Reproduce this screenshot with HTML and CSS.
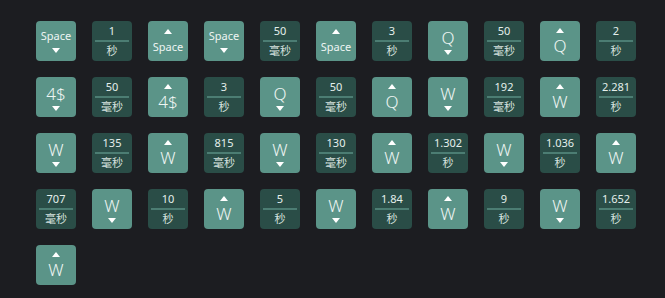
FILE: index.html
```html
<!DOCTYPE html>
<html>
<head>
<meta charset="utf-8">
<link rel="stylesheet" href="styles.css">
</head>
<body>
<div class="seq" id="seq"></div>
<script src="app.js"></script>
</body>
</html>
```

FILE: styles.css
```css
html, body {
  margin: 0;
  padding: 0;
  background: #1c1d21;
}
.seq {
  display: flex;
  flex-wrap: wrap;
  gap: 16px;
  width: 600px;
  padding: 21px 0 0 36px;
  font-family: "Noto Sans", "Noto Sans CJK SC", sans-serif;
}
.tile {
  width: 40px;
  height: 40px;
  border-radius: 4px;
  box-sizing: border-box;
  display: flex;
  flex-direction: column;
  align-items: center;
  justify-content: center;
}
.key {
  background: #5b9488;
  color: #eef5f3;
}
.key .label {
  font-size: 11px;
  line-height: 13px;
}
.key .label.big {
  font-size: 17px;
  line-height: 19px;
  font-weight: 300;
}
.tri {
  width: 0;
  height: 0;
  border-left: 4px solid transparent;
  border-right: 4px solid transparent;
}
.tri.down {
  border-top: 5px solid #ffffff;
  margin-top: 6px;
}
.tri.up {
  border-bottom: 5px solid #ffffff;
  margin-bottom: 6px;
}
.big + .tri.down {
  margin-top: 3px;
}
.tri.up.for-big {
  margin-bottom: 3px;
}
.dur {
  background: #2a4d47;
  color: #e4efec;
  justify-content: flex-start;
  padding: 3px 3px 0;
}
.dur .num {
  font-size: 11px;
  line-height: 14px;
}
.dur .rule {
  align-self: stretch;
  height: 2px;
  background: #4c7d73;
  margin: 2px 0 2px;
}
.dur .unit {
  font-size: 11px;
  line-height: 14px;
  color: #d6e2df;
}
```

FILE: app.js
```js
var items = [
  ["k","Space","d"],["d","1","秒"],["k","Space","u"],["k","Space","d"],["d","50","毫秒"],["k","Space","u"],["d","3","秒"],["k","Q","d"],["d","50","毫秒"],["k","Q","u"],["d","2","秒"],
  ["k","4$","d"],["d","50","毫秒"],["k","4$","u"],["d","3","秒"],["k","Q","d"],["d","50","毫秒"],["k","Q","u"],["k","W","d"],["d","192","毫秒"],["k","W","u"],["d","2.281","秒"],
  ["k","W","d"],["d","135","毫秒"],["k","W","u"],["d","815","毫秒"],["k","W","d"],["d","130","毫秒"],["k","W","u"],["d","1.302","秒"],["k","W","d"],["d","1.036","秒"],["k","W","u"],
  ["d","707","毫秒"],["k","W","d"],["d","10","秒"],["k","W","u"],["d","5","秒"],["k","W","d"],["d","1.84","秒"],["k","W","u"],["d","9","秒"],["k","W","d"],["d","1.652","秒"],
  ["k","W","u"]
];
var seq = document.getElementById("seq");
items.forEach(function (it) {
  var t = document.createElement("div");
  if (it[0] === "k") {
    t.className = "tile key";
    var big = it[1] !== "Space";
    var lab = document.createElement("div");
    lab.className = "label" + (big ? " big" : "");
    lab.textContent = it[1];
    var tri = document.createElement("div");
    tri.className = "tri " + (it[2] === "d" ? "down" : "up") + (big ? " for-big" : "");
    if (it[2] === "d") { t.appendChild(lab); t.appendChild(tri); }
    else { t.appendChild(tri); t.appendChild(lab); }
  } else {
    t.className = "tile dur";
    var n = document.createElement("div");
    n.className = "num"; n.textContent = it[1];
    var r = document.createElement("div");
    r.className = "rule";
    var u = document.createElement("div");
    u.className = "unit"; u.textContent = it[2];
    t.appendChild(n); t.appendChild(r); t.appendChild(u);
  }
  seq.appendChild(t);
});
```
